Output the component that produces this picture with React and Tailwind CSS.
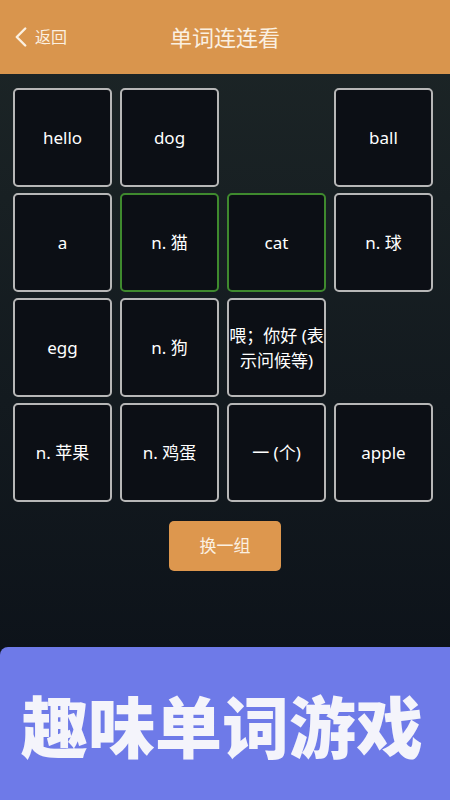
import { ChevronLeft } from "lucide-react";

const cells = [
  { t: "hello" },
  { t: "dog" },
  null,
  { t: "ball" },
  { t: "a" },
  { t: "n. 猫", on: true },
  { t: "cat", on: true },
  { t: "n. 球" },
  { t: "egg" },
  { t: "n. 狗" },
  { lines: ["喂；你好 (表", "示问候等)"] },
  null,
  { t: "n. 苹果" },
  { t: "n. 鸡蛋" },
  { t: "一 (个)" },
  { t: "apple" },
];

export default function App() {
  return (
    <div
      className="w-[450px] h-[800px] flex flex-col overflow-hidden bg-gradient-to-b from-[#1d2627] via-[#131a1f] to-[#0a0f17] text-white"
      style={{ fontFamily: '"Noto Sans", "Noto Sans CJK SC", sans-serif' }}
    >
      {/* header */}
      <div className="h-[74px] shrink-0 bg-[#d9954d] flex items-center relative">
        <div className="flex items-center pl-[4px] text-[#fbf0e1]">
          <ChevronLeft size={34} strokeWidth={1.7} className="-mr-[3px]" />
          <span className="text-[16px]">返回</span>
        </div>
        <div className="absolute inset-0 flex items-center justify-center text-[22px] text-[#fbf0e1] pointer-events-none">
          单词连连看
        </div>
      </div>

      {/* grid */}
      <div className="pt-[14px] pl-[13px] grid grid-cols-[repeat(4,99px)] auto-rows-[99px] gap-x-[8px] gap-y-[6px]">
        {cells.map((c, i) =>
          c ? (
            <div
              key={i}
              className={`rounded-[5px] border-2 bg-[#0c0f15] flex flex-col items-center justify-center text-center text-[17px] ${
                c.on ? "border-[#3f8a2e]" : "border-[#b7b7b7]"
              } ${c.lines ? "leading-[25px]" : ""}`}
            >
              {c.lines
                ? c.lines.map((l) => (
                    <span key={l} className="whitespace-nowrap">
                      {l}
                    </span>
                  ))
                : c.t}
            </div>
          ) : (
            <div key={i} />
          )
        )}
      </div>

      {/* button */}
      <div className="flex justify-center mt-[19px]">
        <button className="w-[112px] h-[50px] rounded-[5px] bg-[#dd974e] text-[17px] text-[#fbf0e1]">
          换一组
        </button>
      </div>

      <div className="flex-1" />

      {/* bottom banner */}
      <div className="h-[153px] shrink-0 bg-[#6e7ae8] rounded-tl-[8px] flex items-center pl-[21px] pt-[8px]">
        <span className="text-[67px] font-black text-[#f4f4fb] leading-none">
          趣味单词游戏
        </span>
      </div>
    </div>
  );
}
